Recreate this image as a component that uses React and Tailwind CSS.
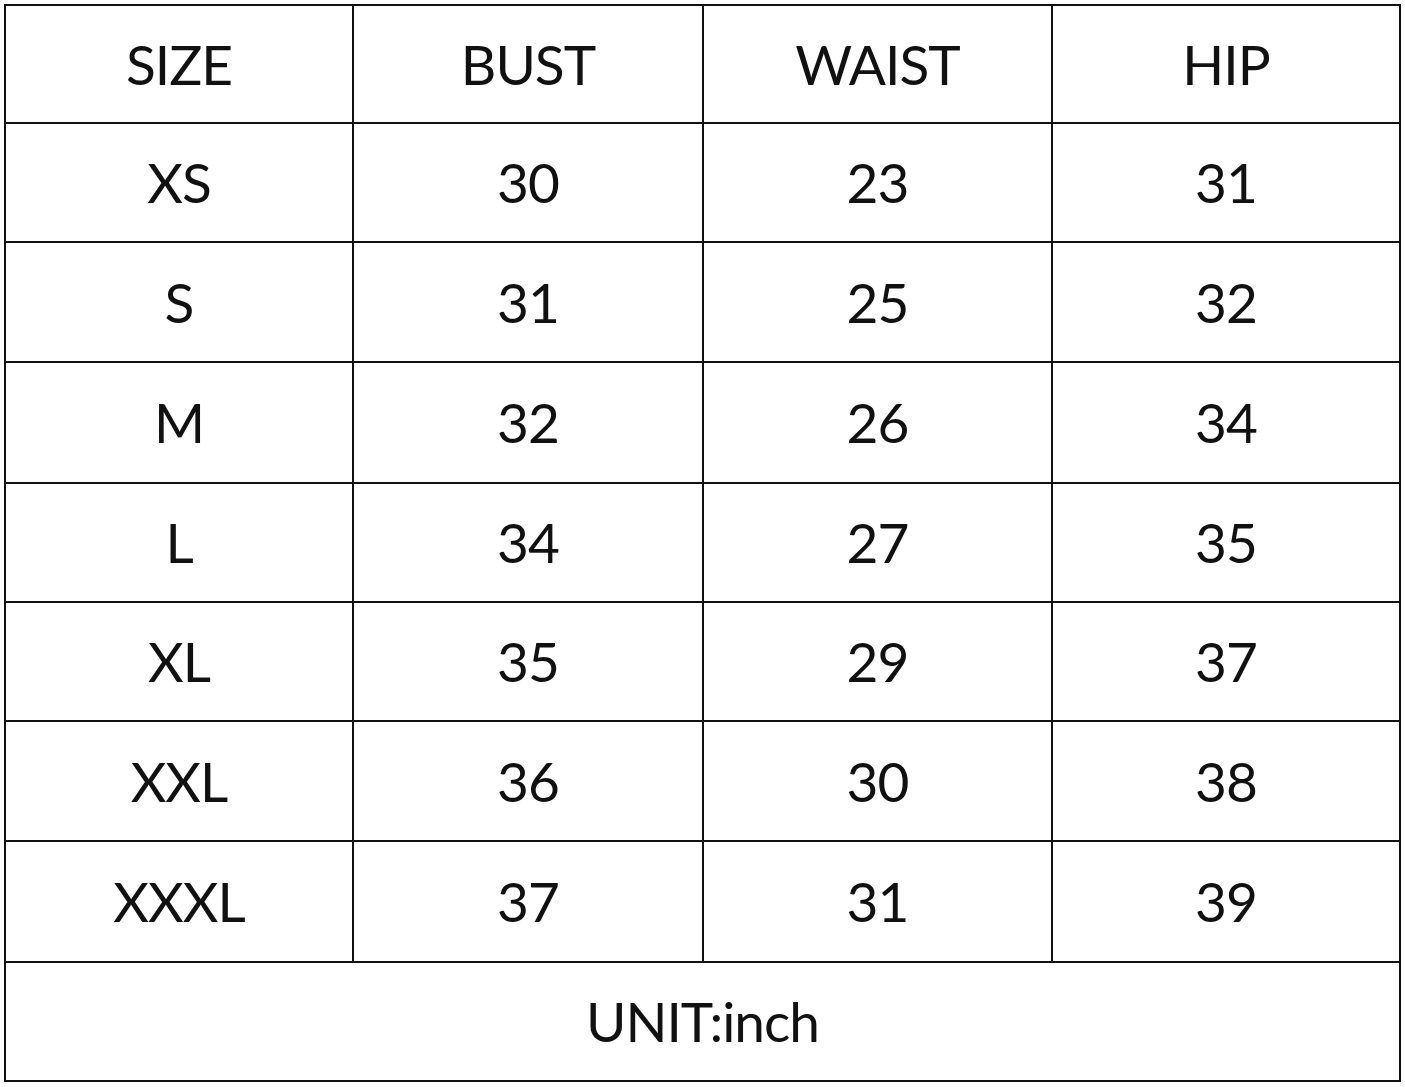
const rows = [
  ["SIZE", "BUST", "WAIST", "HIP"],
  ["XS", "30", "23", "31"],
  ["S", "31", "25", "32"],
  ["M", "32", "26", "34"],
  ["L", "34", "27", "35"],
  ["XL", "35", "29", "37"],
  ["XXL", "36", "30", "38"],
  ["XXXL", "37", "31", "39"],
];

export default function App() {
  return (
    <div className="w-[1405px] h-[1087px] bg-white pt-[4px] pl-[4px] font-['Lato',sans-serif] text-[#111]">
      <div className="grid w-[1397px] grid-cols-[346px_348px_347px_346px] grid-rows-[116px_117px_118px_119px_117px_117px_118px_119px_117px] gap-[2px] bg-[#111] p-[2px]">
        {rows.map((row, i) =>
          row.map((cell, j) => (
            <div
              key={`${i}-${j}`}
              className="flex items-center justify-center bg-white text-[55px] leading-none tracking-[-1px]"
            >
              {cell}
            </div>
          ))
        )}
        <div className="col-span-4 flex items-center justify-center bg-white text-[55px] leading-none tracking-[-1px]">
          UNIT:inch
        </div>
      </div>
    </div>
  );
}
